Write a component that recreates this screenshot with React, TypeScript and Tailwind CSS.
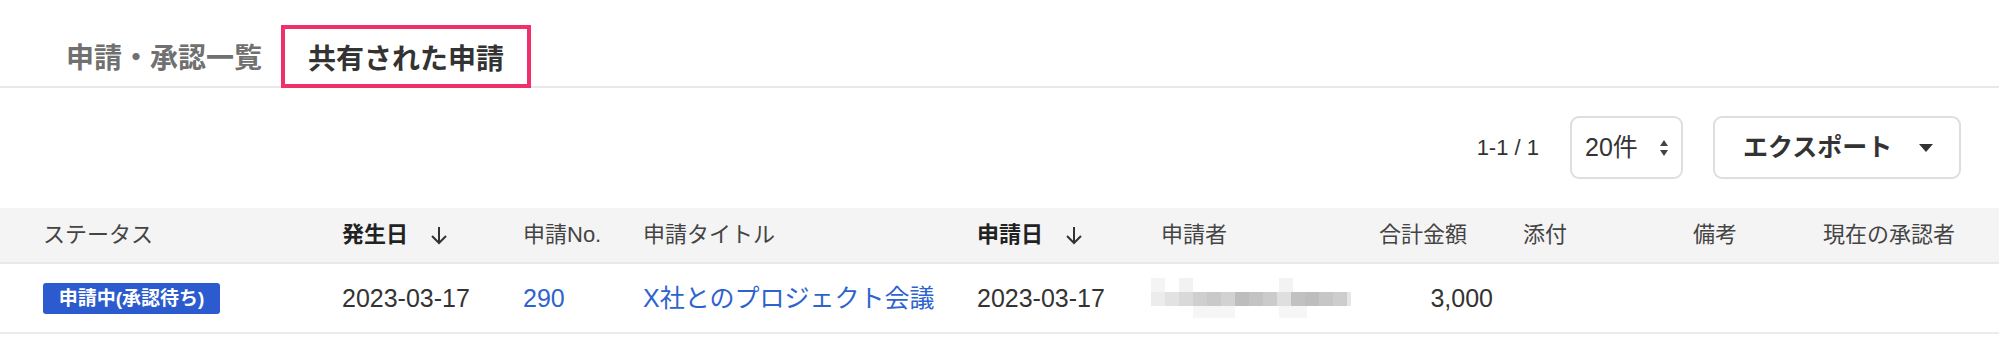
import type { ReactNode } from "react";

const FONT = "font-['Liberation_Sans','Noto_Sans_CJK_JP',sans-serif]";

function SortDown() {
  return (
    <svg width="18" height="19" viewBox="0 0 18 19" className="ml-[22px] shrink-0">
      <path d="M9 1 V17 M2 10 L9 17 L16 10" fill="none" stroke="#333" strokeWidth="2" />
    </svg>
  );
}

// pixelated name (blurred in the source)
function BlurredName() {
  const band = [
    "#ececec", "#e2e2e2", "#d9d9d9", "#cfcfcf", "#c9c9c9", "#d2d2d2", "#bdbdbd",
    "#c3c3c3", "#cbcbcb", "#dfdfdf", "#c1c1c1", "#bdbdbd", "#c6c6c6", "#cdcdcd", "#e6e6e6",
  ];
  return (
    <svg width="200" height="40" viewBox="0 0 200 40">
      <rect x="0" y="0" width="14" height="14" fill="#f4f4f4" />
      <rect x="28" y="0" width="14" height="14" fill="#f2f2f2" />
      <rect x="128" y="0" width="14" height="14" fill="#f3f3f3" />
      {band.map((c, i) => (
        <rect key={i} x={i * 14} y="14" width="14" height="14" fill={c} />
      ))}
      <rect x="42" y="28" width="42" height="12" fill="#f6f6f6" />
      <rect x="128" y="28" width="28" height="12" fill="#f6f6f6" />
    </svg>
  );
}

function Cell({ w, className = "", children }: { w: string; className?: string; children?: ReactNode }) {
  return <div className={`${w} shrink-0 flex items-center ${className}`}>{children}</div>;
}

export default function App() {
  return (
    <div className={`w-[1999px] h-[341px] overflow-hidden bg-white text-[#333] ${FONT}`}>
      {/* Tabs */}
      <div className="flex items-end pl-[66px] pt-[25px] border-b-2 border-[#e8e8e8] h-[88px]">
        <div className="h-[62px] flex items-center pt-[7px] mr-[19px] text-[28px] font-bold leading-none text-[#707070]">
          申請・承認一覧
        </div>
        <div className="h-[63px] -mb-[2px] flex items-center pt-[7px] px-[23px] border-4 border-[#f0306b] bg-white text-[28px] font-bold leading-none text-[#333]">
          共有された申請
        </div>
      </div>

      {/* Toolbar */}
      <div className="flex items-center justify-end pr-[38px] mt-[28px] h-[63px]">
        <span className="text-[22px] leading-none text-[#333] mr-[31px]">1-1 / 1</span>
        <div className="w-[113px] h-[63px] mr-[30px] flex items-center justify-between pl-[13px] pr-[13px] border-2 border-[#dedede] rounded-[9px]">
          <span className="text-[25px] leading-none">20件</span>
          <svg width="8" height="18" viewBox="0 0 8 18">
            <path d="M0 7 L4 1 L8 7 Z M0 11 L4 17 L8 11 Z" fill="#444" />
          </svg>
        </div>
        <div className="w-[248px] h-[63px] flex items-center justify-between pl-[28px] pr-[26px] border-2 border-[#dedede] rounded-[9px]">
          <span className="text-[25px] font-bold leading-none text-[#333]">エクスポート</span>
          <svg width="14" height="8" viewBox="0 0 14 8">
            <path d="M0 0 L14 0 L7 8 Z" fill="#333" />
          </svg>
        </div>
      </div>

      {/* Table */}
      <div className="mt-[29px]">
        <div className="flex h-[56px] pl-[43px] bg-[#f5f4f5] border-b-2 border-[#e9e9e9] text-[22px] leading-none text-[#444]">
          <Cell w="w-[299px]">ステータス</Cell>
          <Cell w="w-[181px]" className="font-bold text-[#222]">
            発生日
            <SortDown />
          </Cell>
          <Cell w="w-[120px]">申請No.</Cell>
          <Cell w="w-[334px]">申請タイトル</Cell>
          <Cell w="w-[174px]" className="font-bold text-[#222]">
            申請日
            <SortDown />
          </Cell>
          <Cell w="w-[222px]" className="pl-[10px]">申請者</Cell>
          <Cell w="w-[150px]" className="justify-end pr-[56px]">合計金額</Cell>
          <Cell w="w-[170px]">添付</Cell>
          <Cell w="w-[130px]">備考</Cell>
          <Cell w="w-[170px]">現在の承認者</Cell>
        </div>
        <div className="flex h-[70px] pl-[43px] border-b-2 border-[#ececec] text-[25px] leading-none text-[#333]">
          <Cell w="w-[299px]">
            <span className="w-[177px] h-[31px] flex items-center justify-center rounded-[3px] bg-[#2b5bcf] text-[19px] font-bold text-white">
              申請中(承認待ち)
            </span>
          </Cell>
          <Cell w="w-[181px]">2023-03-17</Cell>
          <Cell w="w-[120px]" className="text-[#2d63cf]">290</Cell>
          <Cell w="w-[334px]" className="text-[#2d63cf]">X社とのプロジェクト会議</Cell>
          <Cell w="w-[174px]">2023-03-17</Cell>
          <Cell w="w-[222px]">
            <BlurredName />
          </Cell>
          <Cell w="w-[150px]" className="justify-end pr-[30px]">3,000</Cell>
          <Cell w="w-[170px]" />
          <Cell w="w-[130px]" />
          <Cell w="w-[170px]" />
        </div>
      </div>
    </div>
  );
}
